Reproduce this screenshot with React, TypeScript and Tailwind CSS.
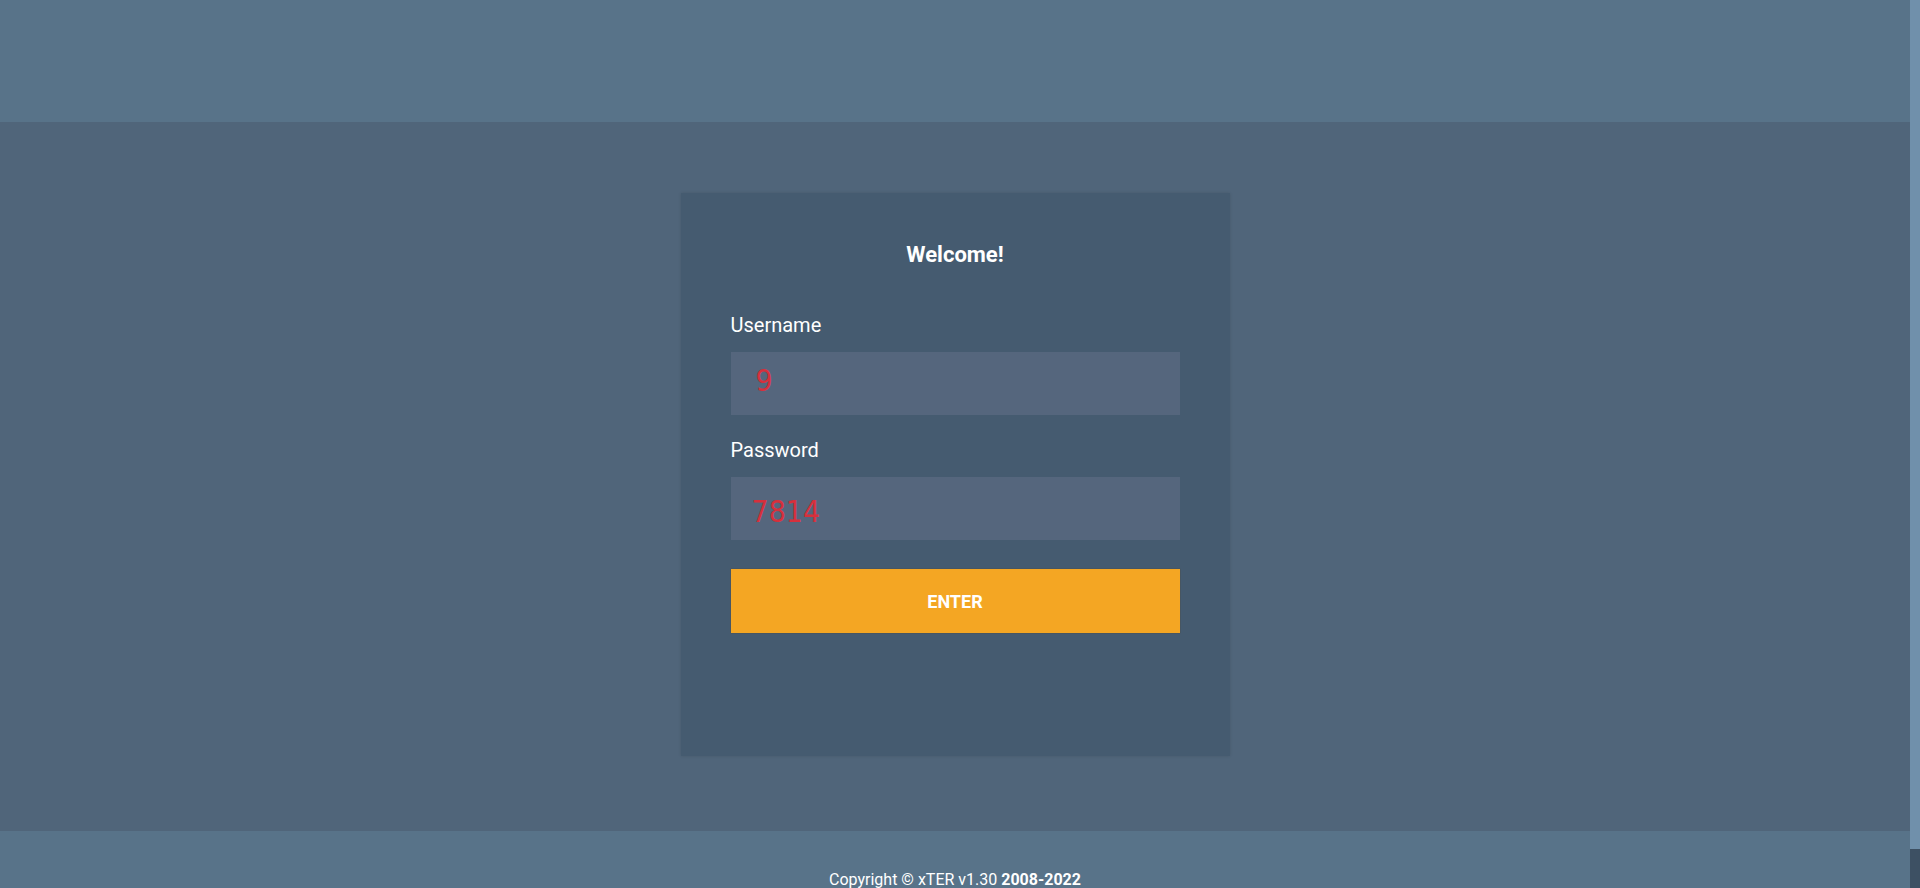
import React from "react";

const Field = ({ label, value, inner }: { label: string; value: string; inner: string }) => {
    return (
        <div className="flex flex-col">
            <label className="text-[20px] leading-[24px] text-white">{label}</label>
            <div className={`mt-[15px] h-[63px] bg-[#55667d] flex items-center ${inner}`}>
                <span className="text-[30px] leading-none text-[#d6303c] font-['DejaVu_Sans_Condensed','Liberation_Sans',sans-serif]">
                    {value}
                </span>
            </div>
        </div>
    );
};

const App = () => {
    return (
        <div className="h-[888px] w-full overflow-hidden flex font-['Roboto',sans-serif] bg-[#50657a]">
            <div className="flex-1 flex flex-col">
                <header className="h-[122px] shrink-0 bg-[#587389]" />

                <main className="h-[709px] shrink-0 flex justify-center pt-[71px]">
                    <div className="w-[549px] h-[563px] bg-[#455b70] shadow-[0_0_3px_rgba(0,0,0,0.12)] px-[50px] pt-[49px]">
                        <h1 className="text-center text-[22px] leading-[26px] font-bold text-white">Welcome!</h1>

                        <div className="mt-[45px]">
                            <Field label="Username" value="9" inner="pl-[25px] pb-[5px]" />
                        </div>
                        <div className="mt-[23px]">
                            <Field label="Password" value="7814" inner="pl-[21px] pt-[7px]" />
                        </div>

                        <button className="mt-[29px] w-full h-[64px] bg-[#f4a623] shadow-[0_0_1px_rgba(90,60,20,0.8)] text-white font-bold text-[18px] uppercase">
                            Enter
                        </button>
                    </div>
                </main>

                <footer className="h-[120px] shrink-0 bg-[#587389] pt-[37px] text-center text-white text-[16px] leading-[24px]">
                    Copyright © xTER v1.30 <b className="font-bold">2008-2022</b>
                </footer>
            </div>

            {/* fake scrollbar */}
            <div className="w-[10px] shrink-0 flex flex-col">
                <div className="h-[849px] bg-[#7090ab]" />
                <div className="flex-1 bg-[#3d5063]" />
            </div>
        </div>
    );
};

export default App;
